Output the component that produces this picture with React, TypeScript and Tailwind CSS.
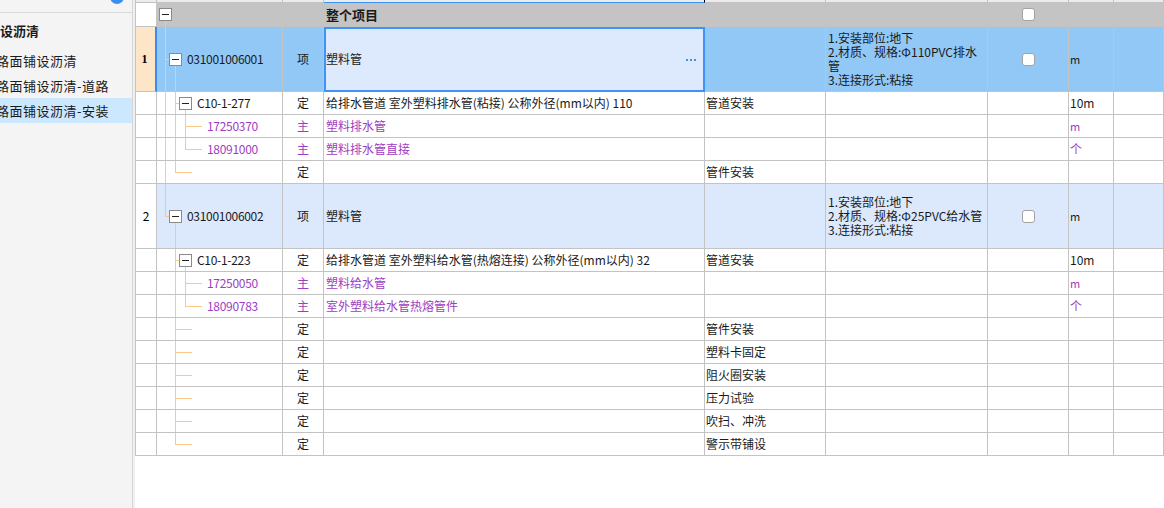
import React from 'react'
import clsx from 'clsx'

type V = { x: number; from: 'top' | 'mid' | 'box'; to: 'bottom' | 'mid' }
type Tree = { v: V[]; h?: [number, number]; box?: number; pad: number }

type Row = {
  no?: string
  kind: 'head' | 'sel' | 'item' | 'norm'
  code?: string
  tree: Tree
  type?: string
  name?: string
  feat?: string
  desc?: string[]
  unit?: string
  purple?: boolean
  check?: boolean
}

const LINE = '#fcc886'

const full = (x: number): V => ({ x, from: 'top', to: 'bottom' })
const half = (x: number): V => ({ x, from: 'top', to: 'mid' })
const down = (x: number): V => ({ x, from: 'box', to: 'bottom' })

const blankDing = (feat: string, last = false, lvl0 = false): Row => ({
  kind: 'norm',
  tree: { v: [...(lvl0 ? [full(8)] : []), last ? half(18) : full(18)], h: [18, 35], pad: 36 },
  type: '定',
  feat,
})

const rows: Row[] = [
  {
    kind: 'head',
    tree: { v: [down(8)], box: 8, pad: 20 },
    name: '整个项目',
    check: true,
  },
  {
    no: '1',
    kind: 'sel',
    code: '031001006001',
    tree: { v: [full(8), down(18)], h: [8, 12], box: 18, pad: 30 },
    type: '项',
    name: '塑料管',
    desc: ['1.安装部位:地下', '2.材质、规格:Φ110PVC排水', '管', '3.连接形式:粘接'],
    unit: 'm',
    check: true,
  },
  {
    kind: 'norm',
    code: 'C10-1-277',
    tree: { v: [full(8), full(18), down(28)], h: [18, 22], box: 28, pad: 40 },
    type: '定',
    name: '给排水管道 室外塑料排水管(粘接) 公称外径(mm以内) 110',
    feat: '管道安装',
    unit: '10m',
  },
  {
    kind: 'norm',
    code: '17250370',
    tree: { v: [full(8), full(18), full(28)], h: [28, 45], pad: 50 },
    type: '主',
    name: '塑料排水管',
    unit: 'm',
    purple: true,
  },
  {
    kind: 'norm',
    code: '18091000',
    tree: { v: [full(8), full(18), half(28)], h: [28, 45], pad: 50 },
    type: '主',
    name: '塑料排水管直接',
    unit: '个',
    purple: true,
  },
  blankDing('管件安装', true, true),
  {
    no: '2',
    kind: 'item',
    code: '031001006002',
    tree: { v: [half(8), down(18)], h: [8, 12], box: 18, pad: 30 },
    type: '项',
    name: '塑料管',
    desc: ['1.安装部位:地下', '2.材质、规格:Φ25PVC给水管', '3.连接形式:粘接'],
    unit: 'm',
    check: true,
  },
  {
    kind: 'norm',
    code: 'C10-1-223',
    tree: { v: [full(18), down(28)], h: [18, 22], box: 28, pad: 40 },
    type: '定',
    name: '给排水管道 室外塑料给水管(热熔连接) 公称外径(mm以内) 32',
    feat: '管道安装',
    unit: '10m',
  },
  {
    kind: 'norm',
    code: '17250050',
    tree: { v: [full(18), full(28)], h: [28, 45], pad: 50 },
    type: '主',
    name: '塑料给水管',
    unit: 'm',
    purple: true,
  },
  {
    kind: 'norm',
    code: '18090783',
    tree: { v: [full(18), half(28)], h: [28, 45], pad: 50 },
    type: '主',
    name: '室外塑料给水管热熔管件',
    unit: '个',
    purple: true,
  },
  blankDing('管件安装'),
  blankDing('塑料卡固定'),
  blankDing('阻火圈安装'),
  blankDing('压力试验'),
  blankDing('吹扫、冲洗'),
  blankDing('警示带铺设', true),
]

const grid = 'grid grid-cols-[21px_126px_41px_381px_121px_162px_81px_45px_1fr]'

const Cell = ({ className = '', children }: { className?: string; children?: React.ReactNode }) => (
  <div
    className={clsx(
      'border-r border-b border-[#c3c3c3] flex items-center overflow-hidden whitespace-nowrap',
      className,
    )}
  >
    {children}
  </div>
)

const TreeGutter = ({ tree, h }: { tree: Tree; h: number }) => {
  const mid = Math.floor(h / 2)
  return (
    <svg width={tree.pad} height={h} className="shrink-0 block" shapeRendering="crispEdges">
      {tree.v.map((l, i) => {
        const y0 = l.from === 'top' ? 0 : l.from === 'mid' ? mid : mid + 7
        const y1 = l.to === 'bottom' ? h : mid + 1
        return <rect key={i} x={l.x} y={y0} width={1} height={y1 - y0} fill={LINE} />
      })}
      {tree.h && <rect x={tree.h[0]} y={mid} width={tree.h[1] - tree.h[0]} height={1} fill={LINE} />}
      {tree.box !== undefined && (
        <g>
          <rect x={tree.box - 5.5} y={mid - 5.5} width={12} height={12} fill="#fff" stroke="#8a8a8a" />
          <rect x={tree.box - 3} y={mid} width={7} height={1} fill="#222" />
        </g>
      )}
    </svg>
  )
}

const Checkbox = () => (
  <span className="w-[13px] h-[13px] rounded-[3px] border border-[#a3a3a3] bg-white" />
)

const TableRow = ({ r }: { r: Row }) => {
  const tall = r.kind === 'sel' || r.kind === 'item'
  const rowH = r.kind === 'head' ? 24 : tall ? 65 : 23
  const bg =
    r.kind === 'head' ? 'bg-[#c4c4c4]' : r.kind === 'sel' ? 'bg-[#92c8f6]' : r.kind === 'item' ? 'bg-[#dce9fc]' : 'bg-white'
  const txt = r.purple ? 'text-[#9d3dc1]' : 'text-[#1a1a1a]'
  return (
    <div className={grid} style={{ height: rowH }}>
      <Cell
        className={clsx(
          'justify-center',
          r.kind === 'sel' ? 'bg-[#fde5c8] border-r-2 border-r-[#3b8cf0]' : 'bg-white',
        )}
      >
        {r.no && (
          <span
            className={clsx(
              'text-[12px]',
              r.kind === 'sel' ? "font-bold font-['Liberation_Serif'] -ml-[2px]" : '',
            )}
          >
            {r.no}
          </span>
        )}
      </Cell>
      <Cell className={bg}>
        <TreeGutter tree={r.tree} h={rowH - 1} />
        {r.code && <span className={clsx('text-[12px] tracking-[-0.3px]', txt)}>{r.code}</span>}
      </Cell>
      <Cell className={clsx(bg, 'justify-center')}>
        {r.type && <span className={clsx('text-[12px]', txt)}>{r.type}</span>}
      </Cell>
      <Cell
        className={clsx(
          'pl-[2px]',
          r.kind === 'sel'
            ? 'bg-[#dde9fc] outline-2 outline-[#3d94f6] -outline-offset-2 justify-between pr-[8px]'
            : bg,
        )}
      >
        {r.name && (
          <span className={clsx(r.kind === 'head' ? 'text-[13px] font-bold' : 'text-[12px]', txt)}>
            {r.name}
          </span>
        )}
        {r.kind === 'sel' && (
          <span className="flex gap-[2px] mt-[1px]">
            <span className="w-[2px] h-[2px] bg-[#4a8fd6]" />
            <span className="w-[2px] h-[2px] bg-[#4a8fd6]" />
            <span className="w-[2px] h-[2px] bg-[#4a8fd6]" />
          </span>
        )}
      </Cell>
      <Cell className={clsx(bg, 'pl-[1px]')}>
        {r.feat && <span className="text-[12px] text-[#1a1a1a]">{r.feat}</span>}
      </Cell>
      <Cell className={clsx(bg, 'pl-[2px]')}>
        {r.desc && (
          <div className="flex flex-col text-[12px] leading-[14px] text-[#1a1a1a]">
            {r.desc.map((d, i) => (
              <span key={i} className="h-[14px] block">
                {d}
              </span>
            ))}
          </div>
        )}
      </Cell>
      <Cell className={clsx(bg, 'justify-center')}>{r.check && <Checkbox />}</Cell>
      <Cell className={clsx(bg, 'pl-[1px]')}>
        {r.unit && (
          <span className={clsx(r.unit === 'm' ? 'text-[11px]' : 'text-[12px]', txt)}>{r.unit}</span>
        )}
      </Cell>
      <Cell className={bg} />
    </div>
  )
}

const Sidebar = () => (
  <div className="w-[133px] shrink-0 h-full bg-[#f4f4f4] border-r border-[#d6d6d6] overflow-hidden text-[#1a1a1a]">
    <div className="h-[13px] border-b border-[#dadada] flex justify-end pr-[8px]">
      <span className="w-[14px] h-[14px] -mt-[10px] rounded-full bg-[#3a8ef0]" />
    </div>
    <div className="h-[35px] flex items-center">
      <span className="text-[13px] font-bold whitespace-nowrap">设沥清</span>
    </div>
    {['路面铺设沥清', '路面铺设沥清-道路', '路面铺设沥清-安装'].map((t, i) => (
      <div key={t} className={clsx('h-[25px] flex items-center', i === 2 && 'bg-[#cce8ff]')}>
        <span className="text-[13px] tracking-[0.5px] whitespace-nowrap -ml-[4px]">{t}</span>
      </div>
    ))}
  </div>
)

export default function App() {
  return (
    <div
      className="w-[1164px] h-[508px] overflow-hidden flex bg-white"
      style={{ fontFamily: '"Noto Sans CJK SC", "Noto Sans", sans-serif' }}
    >
      <Sidebar />
      <div className="w-[2px] shrink-0 bg-[#f0f0f0]" />
      <div className="flex-1 min-w-0 bg-white">
        <div className="border-l border-[#c3c3c3]">
          <div className={clsx(grid, 'h-[3px]')}>
            {Array.from({ length: 9 }).map((_, i) => (
              <div
                key={i}
                className={clsx(
                  'border-r border-b bg-[#ececec]',
                  i === 3 ? 'border-b-[#3d94f6]' : 'border-[#c3c3c3]',
                )}
              />
            ))}
          </div>
          {rows.map((r, i) => (
            <TableRow key={i} r={r} />
          ))}
        </div>
      </div>
    </div>
  )
}
